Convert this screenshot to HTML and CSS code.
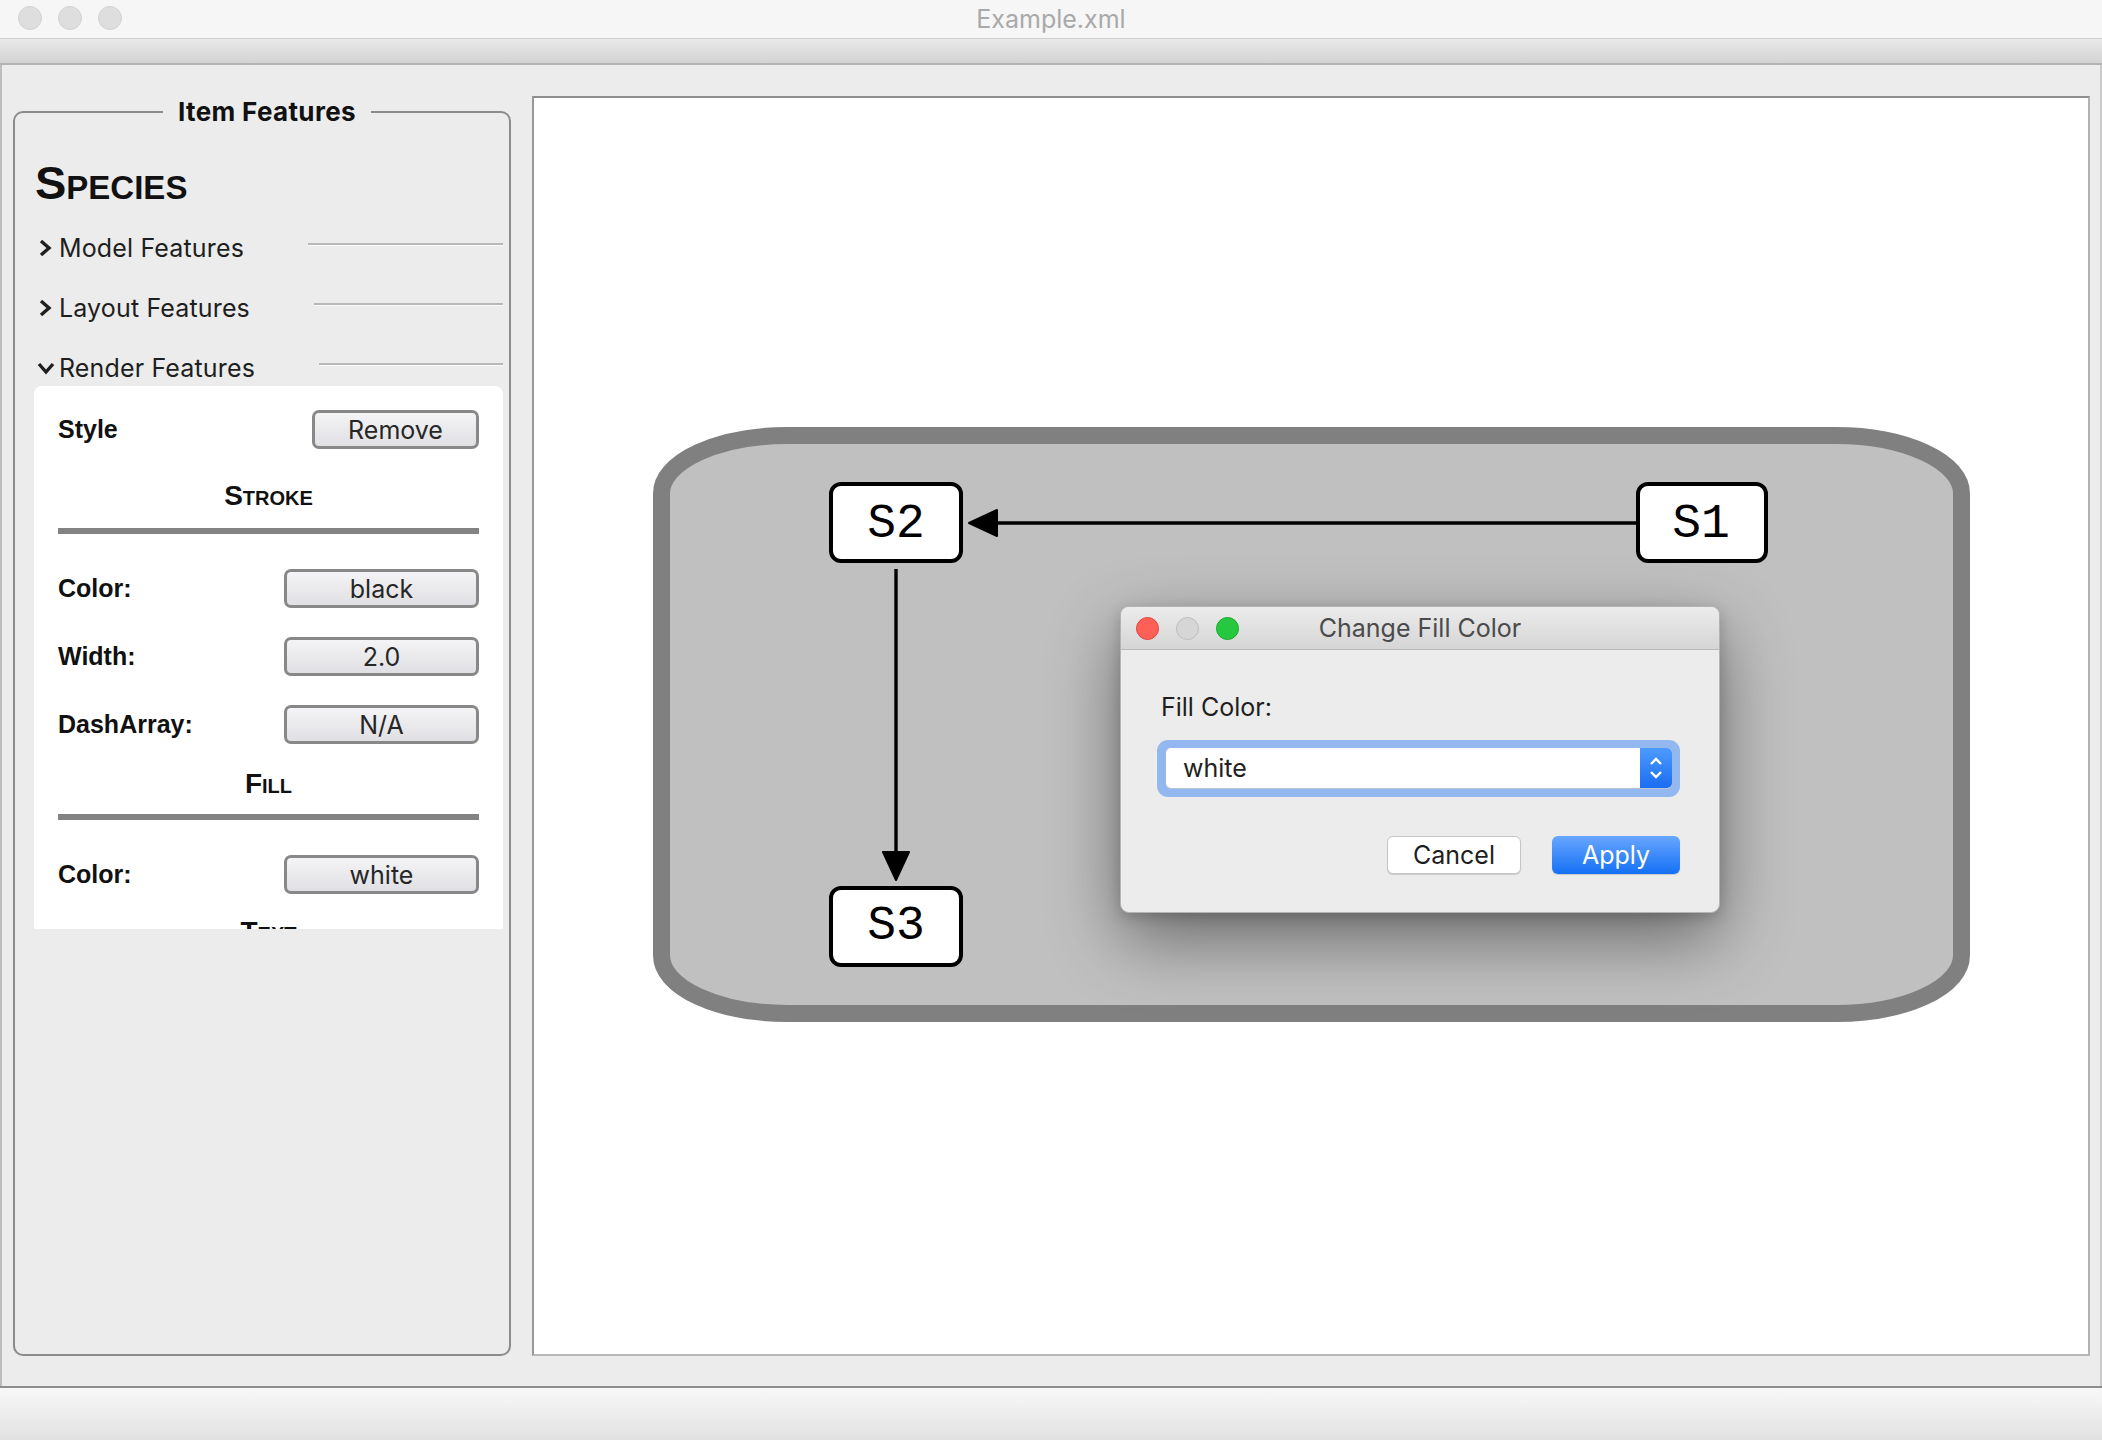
FILE: index.html
```html
<!DOCTYPE html>
<html lang="en">
<head>
<meta charset="utf-8">
<title>Example.xml</title>
<link rel="stylesheet" href="styles.css">
</head>
<body>
<div class="window">
  <header class="titlebar">
    <div class="lights">
      <span class="light"></span><span class="light"></span><span class="light"></span>
    </div>
    <div class="win-title">Example.xml</div>
    <div></div>
  </header>
  <div class="toolbar"></div>

  <main class="main">
    <fieldset class="features">
      <legend>Item Features</legend>
      <h2 class="species">Species</h2>

      <div class="section first">
        <span class="sec-icon"><svg class="chev-r" width="14" height="20" viewBox="0 0 14 20"><polyline points="3,3 11,10 3,17" fill="none" stroke="#1f1f1f" stroke-width="3.4"/></svg></span>
        <span class="sec-label">Model Features</span>
        <span class="sec-rule"></span>
      </div>
      <div class="section">
        <span class="sec-icon"><svg class="chev-r" width="14" height="20" viewBox="0 0 14 20"><polyline points="3,3 11,10 3,17" fill="none" stroke="#1f1f1f" stroke-width="3.4"/></svg></span>
        <span class="sec-label">Layout Features</span>
        <span class="sec-rule"></span>
      </div>
      <div class="section">
        <span class="sec-icon"><svg class="chev-d" width="20" height="14" viewBox="0 0 20 14"><polyline points="3,3 10,11 17,3" fill="none" stroke="#1f1f1f" stroke-width="3.4"/></svg></span>
        <span class="sec-label">Render Features</span>
        <span class="sec-rule"></span>
      </div>

      <div class="props">
        <div class="prop-row">
          <span class="prop-label">Style</span>
          <span class="btn btn-remove">Remove</span>
        </div>
        <div class="heading heading-stroke">Stroke</div>
        <div class="rule-thick rule-stroke"></div>
        <div class="prop-row row-first">
          <span class="prop-label">Color:</span>
          <span class="btn btn-val">black</span>
        </div>
        <div class="prop-row row-next">
          <span class="prop-label">Width:</span>
          <span class="btn btn-val">2.0</span>
        </div>
        <div class="prop-row row-next">
          <span class="prop-label">DashArray:</span>
          <span class="btn btn-val">N/A</span>
        </div>
        <div class="heading heading-fill">Fill</div>
        <div class="rule-thick rule-fill"></div>
        <div class="prop-row row-first">
          <span class="prop-label">Color:</span>
          <span class="btn btn-val">white</span>
        </div>
        <div class="heading heading-text">Text</div>
      </div>
    </fieldset>

    <section class="canvas">
      <svg class="diagram" width="1554" height="1254" viewBox="534 98 1554 1254">
        <rect x="661.5" y="435.5" width="1300" height="578" rx="126" ry="58" fill="#c0c0c0" stroke="#808080" stroke-width="17"/>
        <line x1="1636" y1="523" x2="994" y2="523" stroke="#000" stroke-width="3.6"/>
        <polygon points="969,523 997,510 997,536" fill="#000" stroke="#000" stroke-width="2" stroke-linejoin="round"/>
        <line x1="896" y1="569" x2="896" y2="855" stroke="#000" stroke-width="3.4"/>
        <polygon points="896,880 883,852 909,852" fill="#000" stroke="#000" stroke-width="2" stroke-linejoin="round"/>
        <rect x="831" y="484" width="130" height="77" rx="10" fill="#fff" stroke="#000" stroke-width="4"/>
        <rect x="1638" y="484" width="128" height="77" rx="10" fill="#fff" stroke="#000" stroke-width="4"/>
        <rect x="831" y="888" width="130" height="77" rx="10" fill="#fff" stroke="#000" stroke-width="4"/>
        <text class="node-label" x="896" y="537">S2</text>
        <text class="node-label" x="1701" y="537">S1</text>
        <text class="node-label" x="896" y="939">S3</text>
      </svg>
    </section>
  </main>

  <footer class="statusbar"></footer>

  <div class="dialog">
    <div class="dlg-titlebar">
      <div class="dlg-lights">
        <span class="dl dl-red"></span><span class="dl dl-gray"></span><span class="dl dl-green"></span>
      </div>
      <div class="dlg-title">Change Fill Color</div>
      <div></div>
    </div>
    <div class="dlg-body">
      <div class="dlg-label">Fill Color:</div>
      <div class="combo-ring">
        <div class="combo">
          <span class="combo-text">white</span>
          <span class="combo-step">
            <svg width="16" height="28" viewBox="0 0 16 28"><polyline points="3,10 8,5 13,10" fill="none" stroke="#fff" stroke-width="2.4"/><polyline points="3,18 8,23 13,18" fill="none" stroke="#fff" stroke-width="2.4"/></svg>
          </span>
        </div>
      </div>
      <div class="dlg-buttons">
        <span class="dbtn dbtn-cancel">Cancel</span>
        <span class="dbtn dbtn-apply">Apply</span>
      </div>
    </div>
  </div>
</div>
</body>
</html>
```

FILE: styles.css
```css
* { box-sizing: border-box; }

html, body {
  margin: 0;
  padding: 0;
}

body {
  width: 2102px;
  height: 1440px;
  overflow: hidden;
  background: #ececec;
  font-family: Inter, "Noto Sans", sans-serif;
  color: #1d1d1d;
}

.window {
  position: relative;
  width: 2102px;
  height: 1440px;
  display: flex;
  flex-direction: column;
  box-shadow: inset 2px 0 0 #bdbdbd, inset -2px 0 0 #cacaca;
}

/* ---------- title bar ---------- */
.titlebar {
  flex: none;
  height: 39px;
  background: #f6f6f6;
  border-bottom: 1px solid #cfcfcf;
  display: grid;
  grid-template-columns: 1fr auto 1fr;
  align-items: center;
}

.lights {
  display: flex;
  gap: 16px;
  padding-left: 18px;
  padding-bottom: 2px;
}

.light {
  width: 24px;
  height: 24px;
  border-radius: 50%;
  background: #dedede;
  border: 1px solid #d2d2d2;
}

.win-title {
  font-size: 25px;
  color: #a9a9a9;
  line-height: 30px;
}

.toolbar {
  flex: none;
  height: 26px;
  background: linear-gradient(#e9e9e9, #d3d3d3);
  border-bottom: 2px solid #b3b3b3;
}

/* ---------- main ---------- */
.main {
  flex: 1;
  display: flex;
  gap: 21px;
  padding: 31px 12px 30px 13px;
  min-height: 0;
}

.features {
  flex: none;
  width: 498px;
  min-width: 0;
  margin: 0;
  padding: 0 6px 0 19px;
  border: 2px solid #8b8b8b;
  border-radius: 10px;
}

.features legend {
  margin-left: 129px;
  padding: 0 15px;
  font-weight: 700;
  font-size: 26px;
  letter-spacing: 0.35px;
  line-height: 32px;
  color: #111;
}

.species {
  margin: 31px 0 0 1px;
  font-family: "Liberation Sans", Arial, sans-serif;
  font-weight: 700;
  font-size: 47px;
  line-height: 47px;
  font-variant: small-caps;
  color: #111;
}

.section {
  display: flex;
  align-items: center;
  height: 40px;
  margin-top: 20px;
}

.section.first { margin-top: 22px; }

.sec-icon {
  flex: none;
  width: 25px;
  display: flex;
  align-items: center;
}

.chev-r { display: block; margin-left: 4px; }
.chev-d { display: block; margin-left: 2px; }

.sec-label {
  font-size: 25px;
  letter-spacing: 0.15px;
  line-height: 40px;
  color: #1e1e1e;
}

.sec-rule {
  flex: 1;
  margin-left: 64px;
  margin-bottom: 8px;
  height: 3px;
  border-top: 2px solid #b8b8b8;
  border-bottom: 1px solid #fafafa;
}

/* ---------- properties panel ---------- */
.props {
  margin-top: -2px;
  height: 543px;
  overflow: hidden;
  background: #fff;
  border-radius: 8px 8px 0 0;
  padding: 24px 24px 0;
}

.prop-row {
  display: flex;
  justify-content: space-between;
  align-items: center;
  height: 39px;
}

.row-first { margin-top: 35px; }
.row-next { margin-top: 29px; }

.prop-label {
  font-family: "Liberation Sans", Arial, sans-serif;
  font-weight: 700;
  font-size: 25px;
  color: #111;
}

.btn {
  height: 39px;
  display: flex;
  align-items: center;
  justify-content: center;
  border: 3px solid #888;
  border-radius: 7px;
  background: linear-gradient(#f4f4f6, #e0e0e4);
  font-size: 25px;
  color: #262626;
}

.btn-remove { width: 167px; }
.btn-val { width: 195px; }

.heading {
  font-family: "Liberation Sans", Arial, sans-serif;
  font-weight: 700;
  font-size: 28px;
  line-height: 28px;
  font-variant: small-caps;
  text-align: center;
  color: #111;
}

.heading-stroke { margin-top: 33px; }
.heading-fill { margin-top: 26px; }
.heading-text { margin-top: 24px; }

.rule-thick {
  height: 6px;
  background: #838383;
}

.rule-stroke { margin-top: 18px; }
.rule-fill { margin-top: 16px; }

/* ---------- canvas ---------- */
.canvas {
  flex: 1;
  background: #fff;
  border: 2px solid;
  border-color: #8e8e8e #b2b2b2 #b8b8b8 #999;
  overflow: hidden;
}

.diagram { display: block; }

.node-label {
  font-family: "Liberation Mono", "Courier New", monospace;
  font-size: 48px;
  text-anchor: middle;
  fill: #000;
}

/* ---------- status bar ---------- */
.statusbar {
  flex: none;
  height: 54px;
  border-top: 2px solid #8d8d8d;
  background: linear-gradient(#f8f8f8, #e1e1e1);
}

/* ---------- dialog ---------- */
.dialog {
  position: absolute;
  left: 1120px;
  top: 606px;
  width: 600px;
  height: 307px;
  background: #ececec;
  border: 1px solid #b4b4b4;
  border-radius: 9px;
  overflow: hidden;
  box-shadow: 0 26px 70px rgba(0, 0, 0, 0.45), 0 4px 14px rgba(0, 0, 0, 0.18);
}

.dlg-titlebar {
  height: 43px;
  background: linear-gradient(#ececec, #d5d5d5);
  border-bottom: 1px solid #b8b8b8;
  display: grid;
  grid-template-columns: 1fr auto 1fr;
  align-items: center;
}

.dlg-lights {
  display: flex;
  gap: 17px;
  padding-left: 15px;
}

.dl {
  width: 23px;
  height: 23px;
  border-radius: 50%;
}

.dl-red { background: #fe5f57; border: 1px solid #e2463f; }
.dl-gray { background: #d6d6d6; border: 1px solid #bdbdbd; }
.dl-green { background: #26c840; border: 1px solid #1aa82c; }

.dlg-title {
  font-size: 25px;
  line-height: 30px;
  color: #4b4b4b;
}

.dlg-body {
  padding: 0 39px 0 36px;
}

.dlg-label {
  margin-top: 42px;
  padding-left: 4px;
  font-size: 25px;
  line-height: 30px;
  color: #1e1e1e;
}

.combo-ring {
  margin-top: 18px;
  height: 57px;
  border-radius: 11px;
  background: #93b8ef;
  padding: 8px 8px 9px 9px;
}

.combo {
  height: 40px;
  display: flex;
  align-items: center;
  background: #fff;
  border-radius: 5px;
  box-shadow: 0 1px 0 #b9c4d6;
  overflow: hidden;
}

.combo-text {
  flex: 1;
  padding-left: 17px;
  font-size: 25px;
  color: #222;
}

.combo-step {
  width: 32px;
  height: 40px;
  display: flex;
  align-items: center;
  justify-content: center;
  background: linear-gradient(#4d9bff, #1a6cf1);
}

.dlg-buttons {
  margin-top: 39px;
  display: flex;
  justify-content: flex-end;
  gap: 31px;
}

.dbtn {
  height: 38px;
  display: flex;
  align-items: center;
  justify-content: center;
  border-radius: 6px;
  font-size: 25px;
}

.dbtn-cancel {
  width: 134px;
  background: #fff;
  border: 1px solid #c6c6c6;
  box-shadow: 0 1px 1px rgba(0, 0, 0, 0.15);
  color: #1e1e1e;
}

.dbtn-apply {
  width: 128px;
  background: linear-gradient(#68a6ff, #1570f5);
  color: #fff;
  box-shadow: 0 1px 1px rgba(0, 0, 0, 0.15);
}
```
